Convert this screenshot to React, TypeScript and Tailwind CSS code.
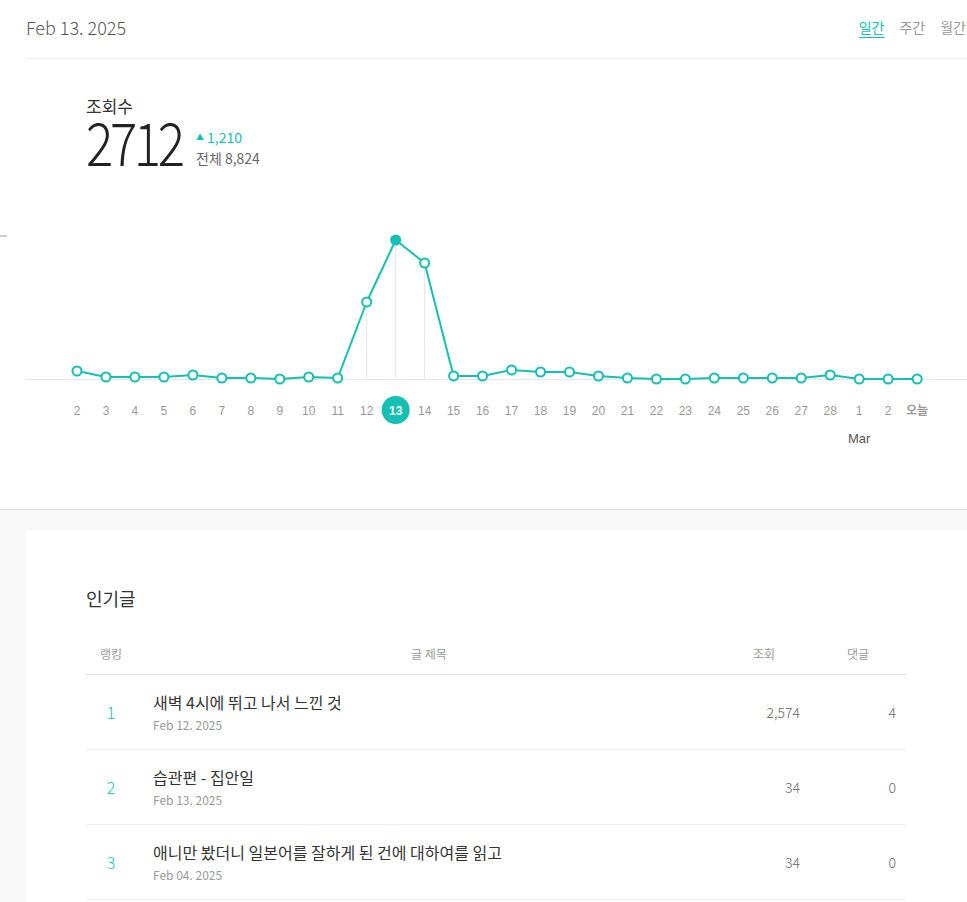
import React from 'react';

const TEAL = '#14bfb3';

const labels = ['2', '3', '4', '5', '6', '7', '8', '9', '10', '11', '12', '13', '14', '15', '16', '17', '18', '19', '20', '21', '22', '23', '24', '25', '26', '27', '28', '1', '2', '오늘'];
// y좌표 (차트 기준선 159)
const values = [151, 157, 157, 157, 155, 158, 158, 159, 157, 158, 82, 20, 43, 156, 156, 150, 152, 152, 156, 158, 159, 159, 158, 158, 158, 158, 155, 159, 159, 159];
const SELECTED = 11;

const posts = [
  { rank: 1, title: '새벽 4시에 뛰고 나서 느낀 것', date: 'Feb 12. 2025', views: '2,574', comments: 4 },
  { rank: 2, title: '습관편 - 집안일', date: 'Feb 13. 2025', views: '34', comments: 0 },
  { rank: 3, title: '애니만 봤더니 일본어를 잘하게 된 건에 대하여를 읽고', date: 'Feb 04. 2025', views: '34', comments: 0 },
];

function Chart() {
  const xs = labels.map((_, i) => 77 + i * 28.97);
  const line = xs.map((x, i) => `${i === 0 ? 'M' : 'L'}${x.toFixed(1)} ${values[i]}`).join(' ');

  return (
    <svg width="967" height="240" viewBox="0 0 967 240" className="block">
      <line x1="0" y1="16" x2="7" y2="16" stroke="#999" strokeWidth="1" />
      <line x1="26" y1="159.5" x2="967" y2="159.5" stroke="#e6e6e6" strokeWidth="1" />
      {[10, 11, 12].map((i) => (
        <line key={i} x1={xs[i]} y1={values[i]} x2={xs[i]} y2="159" stroke="#e6e6e6" strokeWidth="1" />
      ))}
      <path d={line} fill="none" stroke={TEAL} strokeWidth="2" strokeLinejoin="round" />
      {xs.map((x, i) =>
        i === SELECTED ? (
          <circle key={i} cx={x} cy={values[i]} r="5.5" fill={TEAL} />
        ) : (
          <circle key={i} cx={x} cy={values[i]} r="4.5" fill="#fff" stroke={TEAL} strokeWidth="2" />
        )
      )}
      <circle cx={xs[SELECTED]} cy="190" r="14" fill={TEAL} />
      {xs.map((x, i) => (
        <text
          key={i}
          x={x}
          y="194.5"
          textAnchor="middle"
          fontSize="12"
          fontWeight={i === SELECTED || i === labels.length - 1 ? 700 : 400}
          fill={i === SELECTED ? '#fff' : '#999'}
          fontFamily={i === labels.length - 1 ? '"Noto Sans CJK KR", sans-serif' : '"Liberation Sans", Arial, sans-serif'}
        >
          {labels[i]}
        </text>
      ))}
      <text x={xs[27]} y="223" textAnchor="middle" fontSize="13" fill="#555" fontFamily='"Liberation Sans", Arial, sans-serif'>
        Mar
      </text>
    </svg>
  );
}

export default function App() {
  return (
    <div className="w-[967px] min-h-[902px] overflow-hidden bg-white font-['Noto_Sans_CJK_KR',sans-serif] text-[#333]">
      <div className="h-[509px] bg-white">
        <div className="ml-[26px]">
          <div className="flex h-[59px] items-center justify-between border-b border-[#eeeeee] pb-[3px]">
            <span className="text-[18px] font-light text-[#555]">Feb 13. 2025</span>
            <div className="flex gap-[15px] pr-[1px] text-[14px] text-[#999]">
              <span className="text-[#14bfb3] underline underline-offset-[4px]">일간</span>
              <span>주간</span>
              <span>월간</span>
            </div>
          </div>
          <div className="h-[161px] pl-[60px] pt-[35px]">
            <div className="text-[17px] leading-[24px] text-[#333]">조회수</div>
            <div className="flex items-start gap-[12px]">
              <span className="inline-block w-[98px] origin-left scale-x-[0.85] whitespace-nowrap text-[60px] font-light leading-[44px] tracking-[-4px] text-[#222]">
                2712
              </span>
              <div className="mt-[9px] flex flex-col">
                <span className="flex items-center gap-[3px] text-[14px] leading-[20px] text-[#14bfb3]">
                  <span className="text-[8px]">▲</span>1,210
                </span>
                <span className="text-[14px] leading-[22px] text-[#666]">전체 8,824</span>
              </div>
            </div>
          </div>
        </div>
        <Chart />
      </div>

      <div className="border-t border-[#dddddd] bg-[#f8f8f8] pl-[26px] pt-[20px]">
        <div className="w-[941px] bg-white px-[60px] pb-[40px] pt-[55px]">
          <h2 className="text-[18px] leading-[27px] text-[#333]">인기글</h2>
          <div className="mt-[22px] w-[820px]">
            <div className="flex h-[41px] items-center border-b border-[#dddddd] text-[12px] text-[#999]">
              <div className="w-[50px] text-center">랭킹</div>
              <div className="flex-1 pr-[6px] text-center">글 제목</div>
              <div className="w-[72px] text-center">조회</div>
              <div className="w-[106px] pl-[20px] pr-[10px] text-center">댓글</div>
            </div>
            {posts.map((p) => (
              <div key={p.rank} className="flex h-[75px] items-center border-b border-[#eeeeee]">
                <div className="w-[50px] text-center text-[16px] font-light text-[#14bfb3]">{p.rank}</div>
                <div className="flex-1 pl-[17px]">
                  <div className="text-[16px] leading-[22px] text-[#333]">{p.title}</div>
                  <div className="mt-[3px] text-[12px] leading-[18px] text-[#999]">{p.date}</div>
                </div>
                <div className="w-[72px] text-right text-[14px] font-light text-[#666]">{p.views}</div>
                <div className="w-[106px] pr-[10px] text-right text-[14px] font-light text-[#666]">{p.comments}</div>
              </div>
            ))}
          </div>
        </div>
      </div>
    </div>
  );
}
